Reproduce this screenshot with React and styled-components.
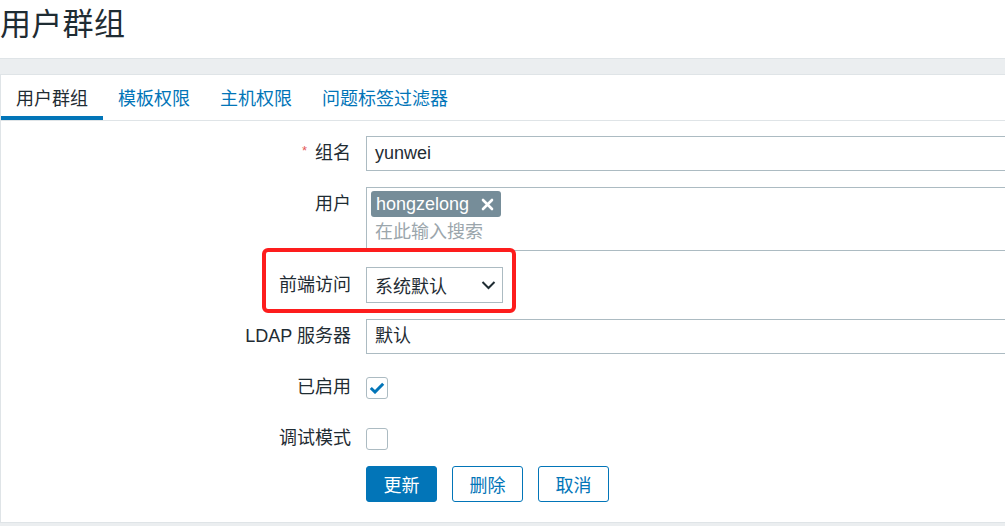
import React from "react";
import styled, { createGlobalStyle } from "styled-components";

const GlobalStyle = createGlobalStyle`
  body {
    margin: 0;
    background: #fff;
    color: #1f2c33;
    font-family: "Liberation Sans", "Noto Sans CJK SC", sans-serif;
    overflow: hidden;
  }
  * { box-sizing: border-box; }
`;

export default function App() {
  return (
    <Page>
      <GlobalStyle />
      <Title>用户群组</Title>
      <Main>
        <Panel>
          <TabList>
            <Tab active>用户群组</Tab>
            <Tab>模板权限</Tab>
            <Tab>主机权限</Tab>
            <Tab>问题标签过滤器</Tab>
          </TabList>

          <Form>
            <Row>
              <Label>
                <Star>*</Star>组名
              </Label>
              <TextInput>yunwei</TextInput>
            </Row>

            <Row>
              <Label>用户</Label>
              <MultiSelect>
                <Tag>
                  hongzelong
                  <TagRemove>
                    <svg width="13" height="13" viewBox="0 0 13 13">
                      <path
                        d="M2 2 L11 11 M11 2 L2 11"
                        stroke="#fff"
                        strokeWidth="2.6"
                        strokeLinecap="round"
                      />
                    </svg>
                  </TagRemove>
                </Tag>
                <Placeholder>在此输入搜索</Placeholder>
              </MultiSelect>
            </Row>

            <Row>
              <Label tall>前端访问</Label>
              <Select>
                系统默认
                <svg width="15" height="10" viewBox="0 0 15 10">
                  <path
                    d="M1.5 2 L7.5 8 L13.5 2"
                    fill="none"
                    stroke="#1f2c33"
                    strokeWidth="2"
                  />
                </svg>
              </Select>
              <Highlight />
            </Row>

            <Row>
              <Label>LDAP 服务器</Label>
              <TextInput>默认</TextInput>
            </Row>

            <Row>
              <Label>已启用</Label>
              <CheckCell>
                <Checkbox>
                  <svg width="16" height="12" viewBox="0 0 16 12">
                    <path
                      d="M1.8 6 L6 10 L14.2 1.8"
                      fill="none"
                      stroke="#0275b8"
                      strokeWidth="3"
                    />
                  </svg>
                </Checkbox>
              </CheckCell>
            </Row>

            <Row>
              <Label>调试模式</Label>
              <CheckCell>
                <Checkbox />
              </CheckCell>
            </Row>

            <Buttons>
              <Button primary>更新</Button>
              <Button>删除</Button>
              <Button>取消</Button>
            </Buttons>
          </Form>
        </Panel>
      </Main>
    </Page>
  );
}

const Page = styled.div`
  width: 100%;
  height: 526px;
  overflow: hidden;
  display: flex;
  flex-direction: column;
`;

const Title = styled.h1`
  margin: 0;
  height: 58px;
  font-size: 31px;
  font-weight: normal;
  line-height: 50px;
  color: #1f2c33;
  letter-spacing: 0.3px;
`;

const Main = styled.div`
  flex: 1;
  background: #ebeef0;
  border-top: 1px solid #dfe4e7;
  padding-top: 15px;
`;

const Panel = styled.div`
  width: calc(100% + 20px);
  background: #fff;
  border: 1px solid #dfe4e7;
`;

const TabList = styled.div`
  display: flex;
  border-bottom: 1px solid #dfe4e7;
`;

const Tab = styled.div`
  height: 45px;
  padding: 3px 15px 0;
  display: flex;
  align-items: center;
  font-size: 18px;
  color: ${(p) => (p.active ? "#1f2c33" : "#0275b8")};
  border-bottom: 4px solid ${(p) => (p.active ? "#0275b8" : "transparent")};
`;

const Form = styled.div`
  padding: 15px 0 20px;
  display: flex;
  flex-direction: column;
  gap: 16px;
`;

const Row = styled.div`
  position: relative;
  display: grid;
  grid-template-columns: 350px 1fr;
  column-gap: 15px;
  align-items: start;
`;

const Label = styled.div`
  height: ${(p) => (p.tall ? "36px" : "35px")};
  text-align: right;
  font-size: 18px;
  line-height: ${(p) => (p.tall ? "36px" : "35px")};
  color: #1f2c33;
`;

const Star = styled.span`
  position: relative;
  top: -4px;
  color: #e45959;
  font-size: 13px;
  line-height: 1;
  margin-right: 8px;
`;

const TextInput = styled.div`
  height: 35px;
  border: 1px solid #acbbc2;
  padding: 0 8px;
  font-size: 18px;
  line-height: 33px;
  color: #1f2c33;
`;

const MultiSelect = styled.div`
  height: 64px;
  border: 1px solid #acbbc2;
  padding: 3px 4px 0;
  display: flex;
  flex-direction: column;
  align-items: flex-start;
`;

const Tag = styled.div`
  height: 26px;
  background: #768d99;
  color: #fff;
  border-radius: 3px;
  padding: 0 7px 0 5px;
  display: flex;
  align-items: center;
  gap: 12px;
  font-size: 18px;
  line-height: 26px;
`;

const TagRemove = styled.span`
  display: flex;
  align-items: center;
`;

const Placeholder = styled.div`
  padding-left: 4px;
  margin-top: 1px;
  font-size: 18px;
  line-height: 28px;
  color: #9ba6ac;
`;

const Select = styled.div`
  width: 137px;
  height: 36px;
  border: 1px solid #acbbc2;
  padding: 0 6px 0 8px;
  display: flex;
  align-items: center;
  justify-content: space-between;
  font-size: 18px;
  color: #1f2c33;
`;

const Highlight = styled.div`
  position: absolute;
  left: 261px;
  top: -19px;
  width: 254px;
  height: 65px;
  border: 4px solid #fd1d1d;
  border-radius: 6px;
  pointer-events: none;
`;

const CheckCell = styled.div`
  height: 35px;
  display: flex;
  align-items: center;
`;

const Checkbox = styled.div`
  width: 22px;
  height: 22px;
  border: 1px solid #acbbc2;
  border-radius: 3px;
  display: flex;
  align-items: center;
  justify-content: center;
`;

const Buttons = styled.div`
  margin-top: -6px;
  padding-left: 365px;
  display: flex;
  gap: 15px;
`;

const Button = styled.div`
  width: 71px;
  height: 36px;
  border-radius: 3px;
  border: 1px solid #0275b8;
  background: ${(p) => (p.primary ? "#0275b8" : "#fff")};
  color: ${(p) => (p.primary ? "#fff" : "#0275b8")};
  display: flex;
  align-items: center;
  justify-content: center;
  font-size: 18px;
`;
